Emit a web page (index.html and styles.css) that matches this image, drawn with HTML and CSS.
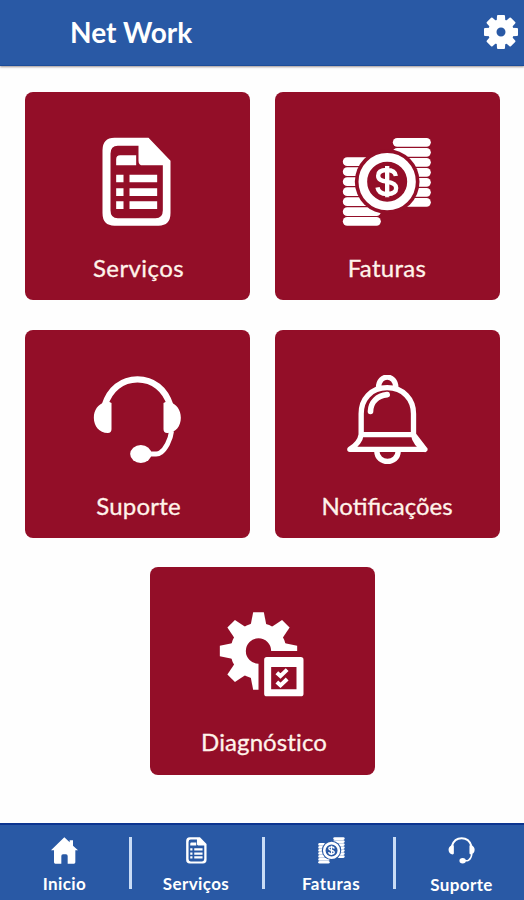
FILE: index.html
```html
<!DOCTYPE html>
<html lang="pt-BR">
<head>
    <meta charset="UTF-8">
    <meta name="viewport" content="width=device-width, initial-scale=1.0">
    <title>Net Work</title>
    <link rel="stylesheet" href="styles.css">
</head>
<body>

    <!-- Ícones reutilizados nos cards e no menu inferior -->
    <svg class="sprite" width="0" height="0">
        <symbol id="icon-servicos" viewBox="22.5 36 270 270">
            <path fill="#fff" fill-rule="evenodd" d="M90 38H192L258 107V264Q258 302 222 302H90Q54 302 54 264V76Q54 38 90 38ZM100 62Q78 62 78 86V256Q78 280 100 280H213Q235 280 235 256V121H175Q162 121 162 107V62Z"/>
            <path fill="#fff" d="M107 91H155V121H95V103Q95 91 107 91ZM95 149H117V172H95ZM135 149H218V172H135ZM95 190H117V213H95ZM135 190H218V213H135ZM95 229H117V252H95ZM135 229H218V252H135Z"/>
        </symbol>
        <symbol id="icon-faturas" viewBox="37.5 36 270 270">
            <g fill="#fff">
                <rect x="190" y="39" width="114" height="26" rx="13"/>
                <rect x="190" y="69" width="114" height="26" rx="13"/>
                <rect x="190" y="99" width="114" height="26" rx="13"/>
                <rect x="190" y="129" width="114" height="26" rx="13"/>
                <rect x="190" y="159" width="114" height="26" rx="13"/>
                <rect x="190" y="189" width="114" height="26" rx="13"/>
                <rect x="190" y="219" width="114" height="26" rx="13"/>
                <rect x="40" y="97" width="114" height="26" rx="13"/>
                <rect x="40" y="127" width="114" height="26" rx="13"/>
                <rect x="40" y="157" width="114" height="26" rx="13"/>
                <rect x="40" y="187" width="114" height="26" rx="13"/>
                <rect x="40" y="217" width="114" height="26" rx="13"/>
                <rect x="40" y="247" width="114" height="26" rx="13"/>
                <rect x="40" y="276" width="114" height="26" rx="13"/>
            </g>
            <circle class="hole" cx="173" cy="170" r="97"/>
            <circle cx="173" cy="170" r="73" fill="none" stroke="#fff" stroke-width="26"/>
            <path fill="none" stroke="#fff" stroke-width="13" d="M199 153C197 140 187 135 172 135C156 135 146 141 146 152C146 164 156 167 172 170C190 173 200 178 200 189C200 201 189 207 173 207C156 207 146 201 144 187M173 123V217"/>
        </symbol>
        <symbol id="icon-suporte" viewBox="37.5 30 270 270">
            <path fill="none" stroke="#fff" stroke-width="19" d="M76 120C91 72 127 43 174 43C221 43 257 72 272 120"/>
            <path fill="#fff" d="M96 114V193Q96 204 85 204C59 203 43 183 43 158C43 135 56 118 75 112Q86 107 96 114ZM252 114V193Q252 204 263 204C289 203 304 183 304 158C304 135 291 118 273 112Q262 107 252 114Z"/>
            <path fill="none" stroke="#fff" stroke-width="15" d="M276 199C273 226 257 253 244 262Q238 267 230 267H208"/>
            <ellipse cx="184" cy="267" rx="32" ry="27" fill="#fff"/>
        </symbol>
    </svg>

    <header class="topbar">
        <h1>Net Work</h1>
        <svg class="settings" viewBox="-51 -51 102 102">
            <circle r="26" fill="none" stroke="#fff" stroke-width="25"/>
            <g fill="#fff">
                <path id="dente" d="M-13 -30L-12 -48Q-12 -51 -9 -51H9Q12 -51 12 -48L13 -30Z"/>
                <use href="#dente" transform="rotate(45)"/>
                <use href="#dente" transform="rotate(90)"/>
                <use href="#dente" transform="rotate(135)"/>
                <use href="#dente" transform="rotate(180)"/>
                <use href="#dente" transform="rotate(225)"/>
                <use href="#dente" transform="rotate(270)"/>
                <use href="#dente" transform="rotate(315)"/>
            </g>
        </svg>
    </header>

    <!-- Cards -->
    <main class="cards">
        <a class="card">
            <svg class="icon"><use href="#icon-servicos"/></svg>
            <span class="label-servicos">Serviços</span>
        </a>
        <a class="card">
            <svg class="icon"><use href="#icon-faturas"/></svg>
            <span>Faturas</span>
        </a>
        <a class="card">
            <svg class="icon"><use href="#icon-suporte"/></svg>
            <span class="label-suporte">Suporte</span>
        </a>
        <a class="card">
            <svg class="icon" viewBox="97.5 30 270 270">
                <g fill="none" stroke="#fff" stroke-width="16" stroke-linejoin="round" stroke-linecap="round">
                    <path d="M155 209V146C155 103 184 68 233 68C282 68 312 103 312 146V209L346 253H121Q151 235 155 209H312Q317 237 346 253"/>
                    <path d="M207 68C207 26 259 26 259 68"/>
                    <path d="M202 259C203 299 265 299 266 259"/>
                    <path stroke-width="17" d="M183 139C184 111 203 93 233 89"/>
                </g>
            </svg>
            <span class="label-notificacoes">Notificações</span>
        </a>
        <a class="card card-center">
            <svg class="icon" viewBox="82.5 36 270 270">
                <g transform="translate(207 153)">
                    <circle r="61" fill="none" stroke="#fff" stroke-width="46"/>
                    <g fill="#fff">
                        <path id="dente-grande" d="M-24 -76L-16 -116H16L24 -76Z"/>
                        <use href="#dente-grande" transform="rotate(45)"/>
                        <use href="#dente-grande" transform="rotate(90)"/>
                        <use href="#dente-grande" transform="rotate(180)"/>
                        <use href="#dente-grande" transform="rotate(225)"/>
                        <use href="#dente-grande" transform="rotate(270)"/>
                        <use href="#dente-grande" transform="rotate(315)"/>
                    </g>
                </g>
                <path class="hole" d="M207 153H345V300H207Z"/>
                <path fill="#fff" fill-rule="evenodd" d="M232 171H334Q342 171 342 179V281Q342 289 334 289H232Q224 289 224 281V179Q224 171 232 171ZM245 201V268H321V201Z"/>
                <path fill="none" stroke="#fff" stroke-width="12" d="M262 218L273 228L293 209M262 246L273 256L293 237"/>
            </svg>
            <span class="label-diagnostico">Diagnóstico</span>
        </a>
    </main>

    <!-- Menu inferior -->
    <nav class="bottom-nav">
        <a class="nav-item">
            <svg class="nav-icon" viewBox="0 0 81 81">
                <path fill="#fff" d="M40 1L56 16V10H66V26L81 40H73V76Q73 80 69 80H50V57Q50 52 45 52H36Q31 52 31 57V80H13Q9 80 9 76V40H0Z"/>
            </svg>
            <span>Inicio</span>
        </a>
        <i class="divider"></i>
        <a class="nav-item nav-item-servicos">
            <svg class="nav-icon"><use href="#icon-servicos"/></svg>
            <span class="nav-servicos">Serviços</span>
        </a>
        <i class="divider"></i>
        <a class="nav-item nav-item-faturas">
            <svg class="nav-icon"><use href="#icon-faturas"/></svg>
            <span>Faturas</span>
        </a>
        <i class="divider"></i>
        <a class="nav-item nav-item-suporte">
            <svg class="nav-icon"><use href="#icon-suporte"/></svg>
            <span class="nav-suporte">Suporte</span>
        </a>
    </nav>

</body>
</html>
```

FILE: styles.css
```css
* {
    box-sizing: border-box;
}

body {
    --fundo: #930e28;
    margin: 0;
    height: 900px;
    display: flex;
    flex-direction: column;
    font-family: Lato, "Open Sans", sans-serif;
    background-color: #fefefe;
    color: #fff;
    overflow: hidden;
}

.sprite {
    display: none;
}

.hole {
    fill: var(--fundo);
}

.topbar {
    height: 66px;
    display: flex;
    justify-content: space-between;
    align-items: center;
    padding: 0 6px 2px 70px;
    background-color: #2959a5;
    border-bottom: 1px solid #1c4c98;
    box-shadow: 0 1px 2px rgba(60, 40, 40, 0.5);
}

.topbar h1 {
    margin: 0;
    font-size: 28px;
    line-height: 34px;
    font-weight: 700;
}

.settings {
    width: 34px;
    height: 34px;
}

.cards {
    flex: 1;
    display: grid;
    grid-template-columns: 225px 225px;
    grid-auto-rows: 208px;
    gap: 29.5px 25px;
    justify-content: center;
    align-content: start;
    padding-top: 26px;
}

.card {
    display: flex;
    flex-direction: column;
    align-items: center;
    padding-top: 45px;
    background-color: #930e28;
    border-radius: 8px;
}

.card-center {
    grid-column: 1 / 3;
    justify-self: center;
    width: 225px;
}

.icon {
    width: 90px;
    height: 90px;
}

.card span {
    margin-top: 26px;
    font-size: 24px;
    line-height: 30px;
    letter-spacing: 0.3px;
    color: #fff3ea;
    -webkit-text-stroke: 0.3px #fff3ea;
}

.card .label-servicos {
    padding-left: 3px;
    letter-spacing: 0.4px;
}

.card .label-suporte {
    padding-left: 3px;
    letter-spacing: 0.2px;
}

.card .label-notificacoes {
    letter-spacing: 0;
}

.card .label-diagnostico {
    margin-top: 25px;
    padding-left: 4px;
    letter-spacing: 0.1px;
}

.bottom-nav {
    --fundo: #2959a5;
    height: 77px;
    display: grid;
    grid-template-columns: 129px 3px 130px 3px 128px 3px 128px;
    padding-top: 12px;
    background-color: #2959a5;
    border-top: 2px solid #0c3590;
}

.nav-item {
    display: flex;
    flex-direction: column;
    align-items: center;
}

.nav-item-servicos {
    padding-right: 2px;
}

.nav-item-faturas {
    padding-left: 4px;
}

.nav-item-suporte {
    padding-left: 3px;
}

.nav-icon {
    width: 27px;
    height: 27px;
}

.nav-item span {
    margin-top: 9px;
    font-size: 17px;
    line-height: 22px;
    font-weight: 700;
    letter-spacing: 0.4px;
}

.nav-item .nav-suporte {
    margin-top: 10px;
}

.divider {
    height: 52px;
    background-color: #c9dcf6;
}
```
